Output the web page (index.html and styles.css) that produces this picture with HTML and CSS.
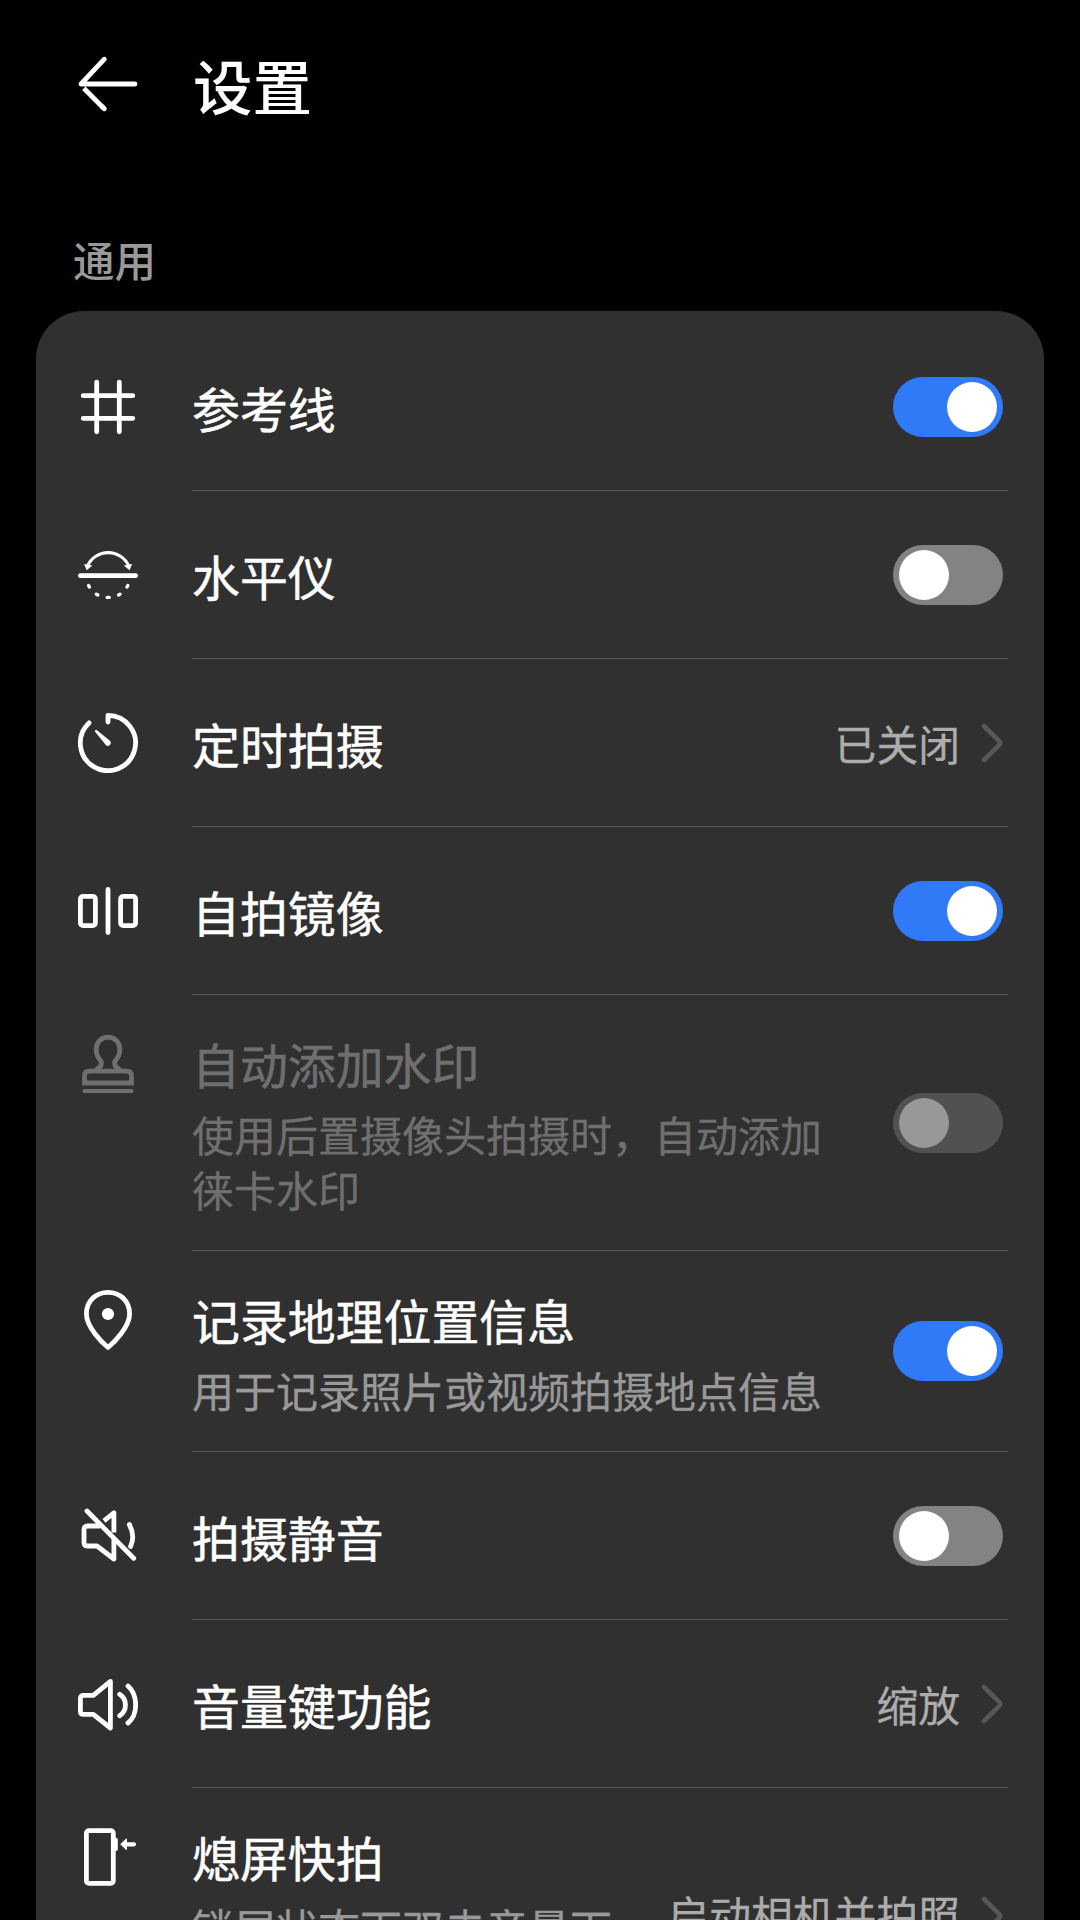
FILE: index.html
```html
<!DOCTYPE html>
<html lang="zh-CN">
<head>
<meta charset="UTF-8">
<meta name="viewport" content="width=device-width, initial-scale=1">
<title>设置</title>
<link rel="stylesheet" href="styles.css">
</head>
<body>
<div class="screen">
  <header class="topbar">
    <svg class="icon" viewBox="0 0 60 60"><path d="M57 30H3L26.3 5.2"/><path class="butt" d="M5.8 34.3 25.5 54"/><path d="M24 52.5 26.3 54.8"/></svg>
    <h1 class="topbar__title">设置</h1>
  </header>
  <h2 class="section-title">通用</h2>
  <main class="card">
    <section class="row">
      <svg class="icon" viewBox="0 0 60 60"><path d="M18.7 5.2V54.8M41.3 5.2V54.8M5.2 18.7H54.8M5.2 41.3H54.8"/></svg>
      <div class="row__body">
        <div class="row__text"><div class="row__title">参考线</div></div>
        <span class="switch switch--on"><i class="switch__knob"></i></span>
      </div>
    </section>
    <section class="row">
      <svg class="icon" viewBox="0 0 60 60"><path d="M2.4 30.7H57.6"/><path class="thin" d="M9.5 21A22.6 22.6 0 0 1 50.8 21"/><path class="dash" d="M10.6 40.6 11.4 42M18.4 49.2 19.8 50M29.2 52.4H31.2M40.6 50 42 49.200M49 42 49.800 40.600"/><path class="solid" d="M6 19 14.400 20.400 8.700 25.200ZM54.200 19 45.800 20.400 51.500 25.200Z"/></svg>
      <div class="row__body">
        <div class="row__text"><div class="row__title">水平仪</div></div>
        <span class="switch"><i class="switch__knob"></i></span>
      </div>
    </section>
    <section class="row">
      <svg class="icon" viewBox="0 0 60 60"><path d="M30 9V2.4A27.600 27.600 0 1 1 11 9.900"/><path class="solid" d="M19 17.2 32.2 28A3 3 0 0 1 28 32.2L17.3 19A1.2 1.2 0 0 1 19 17.2Z"/></svg>
      <div class="row__body">
        <div class="row__text"><div class="row__title">定时拍摄</div></div>
        <span class="row__value">已关闭</span>
        <svg class="chevron" viewBox="0 0 24 42"><path d="M5 4 20 18.8Q22.2 21 20 23.2L5 38"/></svg>
      </div>
    </section>
    <section class="row">
      <svg class="icon" viewBox="0 0 60 60"><rect x="2.4" y="15.4" width="15" height="29.2" rx="2.6"/><rect x="42.6" y="15.4" width="15" height="29.2" rx="2.6"/><path d="M30 8.4V51.6"/></svg>
      <div class="row__body">
        <div class="row__text"><div class="row__title">自拍镜像</div></div>
        <span class="switch switch--on"><i class="switch__knob"></i></span>
      </div>
    </section>
    <section class="row row--top row--disabled">
      <svg class="icon" viewBox="0 0 60 60"><path class="miter" d="M6.5 49V42Q6.5 37.2 11.3 37.2H48.7Q53.5 37.2 53.5 42V49Z"/><path class="butt" d="M17 37C22.5 33.5 25.5 29.5 22 26C19.5 23 18.2 20 18.2 15A11.8 11.8 0 0 1 41.8 15C41.8 20 40.5 23 38 26C34.5 29.5 37.5 33.5 43 37"/><path class="mid" d="M6.3 57H53.7"/></svg>
      <div class="row__body">
        <div class="row__text">
          <div class="row__title">自动添加水印</div>
          <p class="row__summary">使用后置摄像头拍摄时，自动添加徕卡水印</p>
        </div>
        <span class="switch switch--disabled"><i class="switch__knob"></i></span>
      </div>
    </section>
    <section class="row row--top">
      <svg class="icon" viewBox="0 0 60 60"><path d="M30 57.5C24 52.5 8.4 37 8.4 24C8.4 11 18 2.4 30 2.4S51.6 11 51.6 24C51.6 37 36 52.5 30 57.5Z"/><circle class="solid" cx="30" cy="24" r="6.1"/></svg>
      <div class="row__body">
        <div class="row__text">
          <div class="row__title">记录地理位置信息</div>
          <p class="row__summary">用于记录照片或视频拍摄地点信息</p>
        </div>
        <span class="switch switch--on"><i class="switch__knob"></i></span>
      </div>
    </section>
    <section class="row">
      <svg class="icon" viewBox="0 0 60 60"><path d="M9 5 55.7 52.3"/><path class="butt" d="M22 20H9.5Q6 20 6 23.5V36.5Q6 40 9.5 40H19L35.9 53V32M26 14.8 35.9 6.8V26.5"/><path d="M51.3 18.5Q57.5 29.5 52.6 40.5"/></svg>
      <div class="row__body">
        <div class="row__text"><div class="row__title">拍摄静音</div></div>
        <span class="switch"><i class="switch__knob"></i></span>
      </div>
    </section>
    <section class="row">
      <svg class="icon" viewBox="0 0 60 60"><path d="M15.3 21.3H5.6Q2.4 21.3 2.4 24.5V37.2Q2.4 40.4 5.6 40.4H15.3L32.4 54V7.3Z"/><path d="M41.7 20.3C49.4 25.5 49.4 36.5 41.7 41.7M50 12C60.2 21 60.2 41 50 49"/></svg>
      <div class="row__body">
        <div class="row__text"><div class="row__title">音量键功能</div></div>
        <span class="row__value">缩放</span>
        <svg class="chevron" viewBox="0 0 24 42"><path d="M5 4 20 18.8Q22.2 21 20 23.2L5 38"/></svg>
      </div>
    </section>
    <section class="row row--top row--tall">
      <svg class="icon" viewBox="0 0 60 60"><rect x="8.4" y="3.7" width="26.9" height="52.6" rx="2.5"/><path class="solid" d="M37 10.7H38.2Q39.8 10.7 39.8 13V21.8Q39.8 24 38.2 24H37ZM42.2 17.3 48 11.8Q49 11 49 12.3V15.2H56A2.1 2.1 0 0 1 56 19.4H49V22.3Q49 23.6 48 22.8Z"/></svg>
      <div class="row__body">
        <div class="row__text">
          <div class="row__title">熄屏快拍</div>
          <p class="row__summary">锁屏状态下双击音量下</p>
        </div>
        <span class="row__value">启动相机并拍照</span>
        <svg class="chevron" viewBox="0 0 24 42"><path d="M5 4 20 18.8Q22.2 21 20 23.2L5 38"/></svg>
      </div>
    </section>
  </main>
</div>
</body>
</html>
```
FILE: styles.css
```css
* {
  box-sizing: border-box;
}

body {
  margin: 0;
  background: #000;
  color: #fff;
  font-family: "Noto Sans CJK SC", sans-serif;
}

.screen {
  height: 1920px;
  overflow: hidden;
  padding: 0 36px;
}

.topbar {
  display: flex;
  align-items: center;
  gap: 55px;
  height: 168px;
  padding-left: 42px;
}

.topbar__title {
  margin: 0;
  font-size: 59.5px;
  font-weight: 500;
  line-height: 80px;
}

.section-title {
  margin: 0;
  height: 143px;
  padding: 61px 37px 0;
  color: #999;
  font-size: 41.5px;
  font-weight: 500;
  line-height: 60px;
}

.card {
  padding: 12px 36px 0 42px;
  background: #303030;
  border-radius: 48px 48px 0 0;
}

.row {
  display: flex;
  align-items: center;
  gap: 54px;
  height: 168px;
}

.row--top {
  align-items: flex-start;
  height: auto;
}

.row--tall {
  height: 256px;
}

.row__body {
  flex: 1;
  align-self: stretch;
  display: flex;
  align-items: center;
  padding: 0 5px 1px 0;
  box-shadow: inset 0 -1px #595959;
}

.row__text {
  flex: 1;
  min-width: 0;
}

.row--top .row__text {
  align-self: flex-start;
  margin-right: 30px;
  padding: 36px 40px 34px 0;
}

.row--tall .row__text {
  padding-right: 0;
}

.row__title {
  font-size: 47.9px;
  line-height: 64px;
  -webkit-text-stroke: 0.5px currentColor;
}

.row__summary {
  margin: 11px 0 0;
  color: #999;
  font-size: 42px;
  line-height: 55px;
  -webkit-text-stroke: 0.3px currentColor;
}

.row__value {
  color: #acacac;
  font-size: 41.8px;
  line-height: 60px;
  white-space: nowrap;
  -webkit-text-stroke: 0.3px currentColor;
}

.row--tall .row__value {
  padding-bottom: 3px;
}

.icon {
  flex: none;
  width: 60px;
  height: 60px;
  fill: none;
  stroke: #fff;
  stroke-width: 4.8;
  stroke-linecap: round;
  stroke-linejoin: round;
}

.row--top .icon {
  margin-top: 39px;
}

.icon .solid {
  fill: #fff;
  stroke: none;
}

.icon .thin {
  stroke-width: 3.1;
}

.icon .dash {
  stroke-width: 3.4;
}

.icon .mid {
  stroke-width: 3.8;
}

.icon .butt {
  stroke-linecap: butt;
}

.icon .miter {
  stroke-linejoin: miter;
}

.chevron {
  flex: none;
  width: 24px;
  height: 42px;
  margin-left: 19px;
  fill: none;
  stroke: #575757;
  stroke-width: 4.6;
  stroke-linecap: round;
}

.switch {
  flex: none;
  display: flex;
  width: 110px;
  height: 60px;
  padding: 5px 6px;
  border-radius: 30px;
  background: #838383;
}

.switch--on {
  justify-content: flex-end;
  background: #317af7;
}

.switch__knob {
  width: 50px;
  height: 50px;
  border-radius: 50%;
  background: #fff;
}

.switch--disabled {
  background: #515151;
}

.switch--disabled .switch__knob {
  background: #989898;
}

.row--disabled .icon {
  stroke: #6f6f6f;
}

.row--disabled .row__title,
.row--disabled .row__summary {
  color: #6f6f6f;
}
```
